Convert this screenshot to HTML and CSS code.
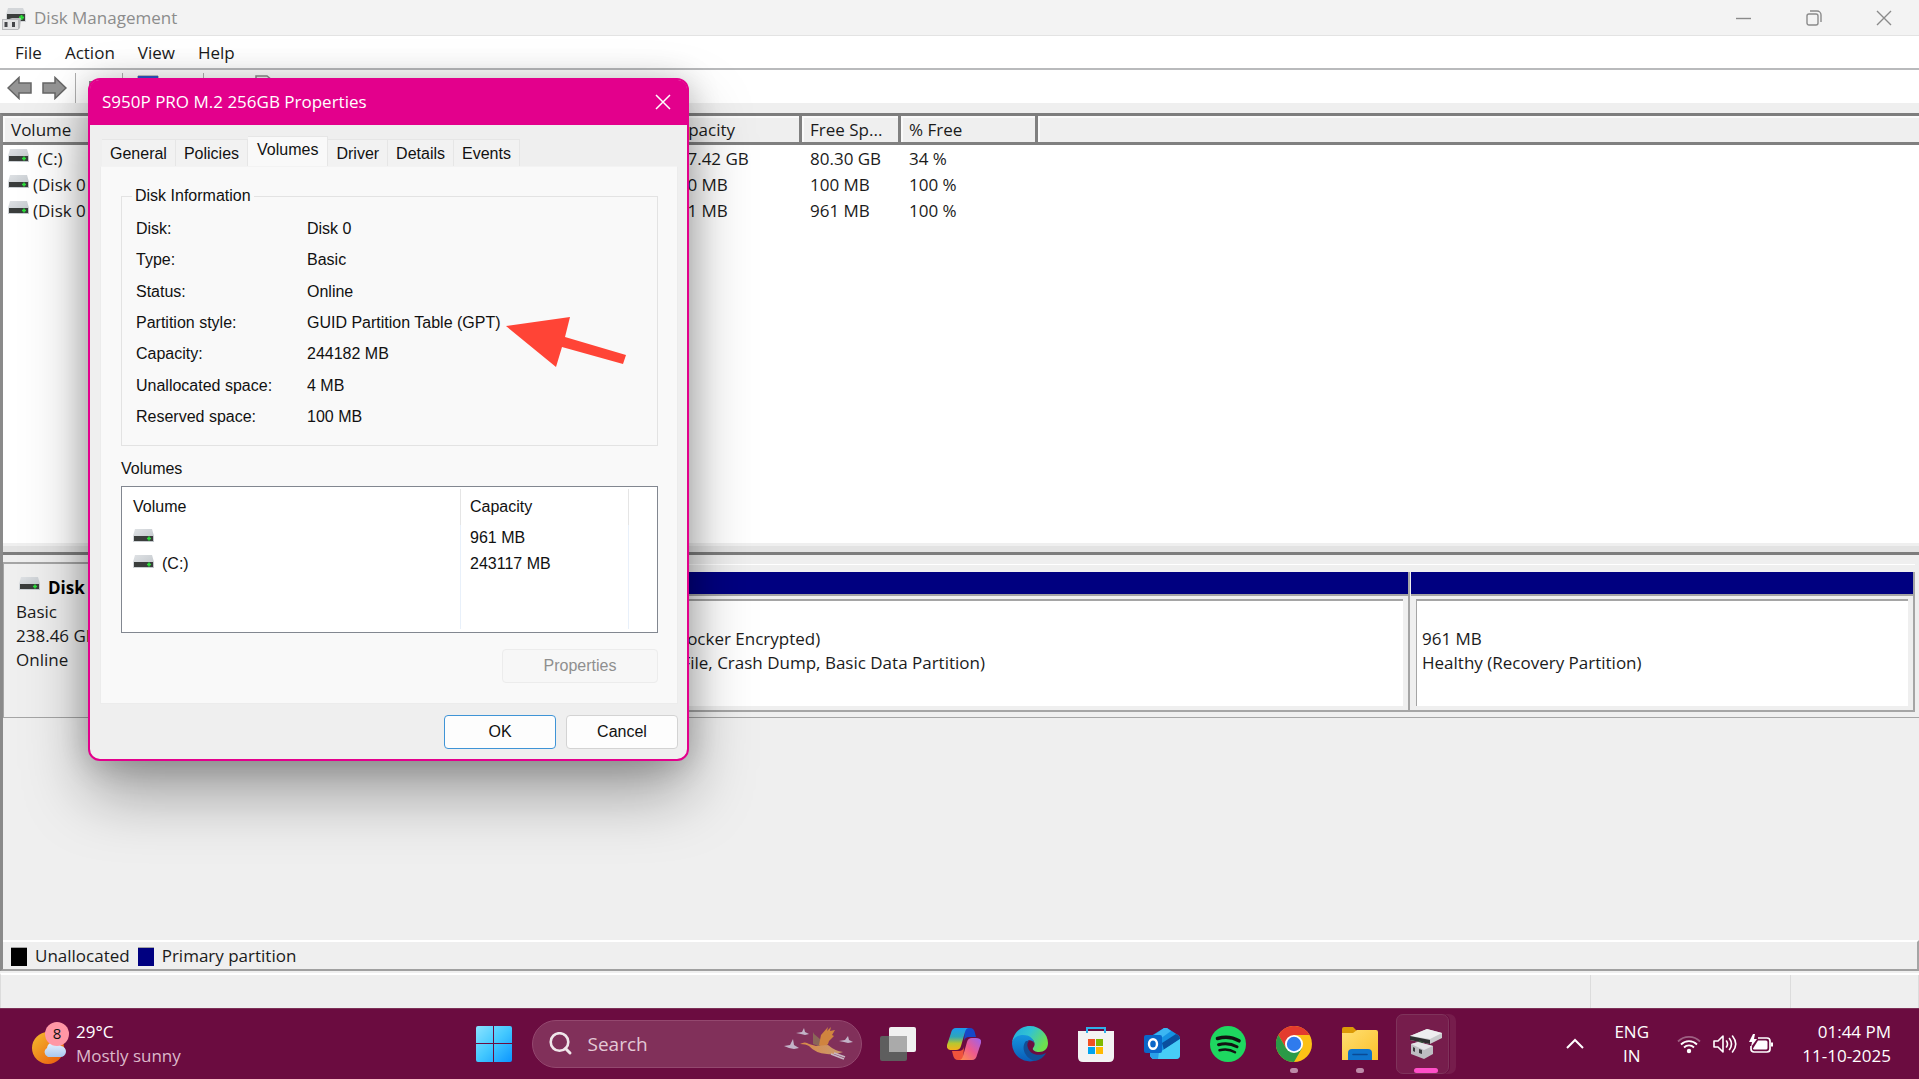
FILE: index.html
```html
<!DOCTYPE html>
<html lang="en">

<head>
    <meta charset="UTF-8">
    <meta name="viewport" content="width=device-width, initial-scale=1.0">
    <title>Disk Management</title>
    <link rel="stylesheet" href="styles.css">
</head>

<body>
    <!-- shared icons -->
    <svg class="defs" width="0" height="0" aria-hidden="true">
        <defs>
            <linearGradient id="drive-top" x1="0" y1="0" x2="1" y2="1">
                <stop offset="0" stop-color="#dfe2e5" />
                <stop offset="1" stop-color="#bfc4c9" />
            </linearGradient>
            <symbol id="drive" viewBox="0 0 21 13">
                <path d="M2 0h17l2 7v6H0V7z" fill="url(#drive-top)" />
                <rect x="1" y="7" width="19" height="5" fill="#3a3d3c" />
                <path d="M14 9.500h4M16 7.500v4" stroke="#2be03a" stroke-width="1.600" />
            </symbol>
        </defs>
    </svg>

    <main class="window">
        <header class="titlebar">
            <svg class="app-icon" width="24" height="24" viewBox="0 0 24 24" aria-hidden="true">
                <path d="M6 2h15l3 7v7H4V9z" fill="#d3d6d9" />
                <rect x="5" y="8" width="18" height="7" fill="#3b3e3d" />
                <path d="M17 11.500h5M19.500 9v5" stroke="#2be03a" stroke-width="2" />
                <path d="M0 13h7l3-1h9l-1 10-2 2H0z" fill="#b9babd" />
                <rect x="1" y="14" width="15" height="9" fill="#e4e4e6" />
                <path d="M4 16v5M11.500 16v5" stroke="#45464a" stroke-width="3" />
            </svg>
            <h1>Disk Management</h1>
            <div class="window-controls">
                <button type="button" aria-label="Minimize"><svg width="16" height="16"><path d="M0 8.500h15" /></svg></button>
                <button type="button" aria-label="Restore"><svg width="16" height="16"><rect x="1" y="4" width="11" height="11" rx="2" /><path d="M4 1h7a4 4 0 0 1 4 4v7" /></svg></button>
                <button type="button" aria-label="Close"><svg width="16" height="16"><path d="M1 1l14 14M15 1L1 15" /></svg></button>
            </div>
        </header>

        <nav class="menubar">
            <button type="button">File</button>
            <button type="button">Action</button>
            <button type="button">View</button>
            <button type="button">Help</button>
        </nav>

        <div class="toolbar">
            <button type="button" aria-label="Back"><svg width="26" height="24" viewBox="0 0 26 24"><path d="M1 12L12 1.500V7h12v10H12v5.500z" fill="#949494" stroke="#666" stroke-width="1.500" /></svg></button>
            <button type="button" aria-label="Forward"><svg width="26" height="24" viewBox="0 0 26 24"><path d="M25 12L14 1.500V7H2v10h12v5.500z" fill="#949494" stroke="#666" stroke-width="1.500" /></svg></button>
            <span class="separator"></span>
            <button type="button" aria-label="Up"><svg width="26" height="26" viewBox="0 0 26 26"><path d="M1 6h9l2 3h12v14H1z" fill="#8b8b8b" /></svg></button>
            <span class="separator"></span>
            <button type="button" aria-label="Console tree"><svg width="26" height="26" viewBox="0 0 26 26"><path d="M3 1h20v24H3z" fill="#fff" stroke="#888" /><path d="M3 1h20v4H3z" fill="#2f56c8" /></svg></button>
            <button type="button" aria-label="Help"><svg width="26" height="26" viewBox="0 0 26 26"><rect x="3" y="6" width="18" height="18" fill="#2f56c8" /></svg></button>
            <span class="separator"></span>
            <button type="button" aria-label="Refresh"><svg width="26" height="26" viewBox="0 0 26 26"><circle cx="13" cy="15" r="7" fill="none" stroke="#888" stroke-width="2" /></svg></button>
            <button type="button" aria-label="Properties"><svg width="26" height="26" viewBox="0 0 26 26"><path d="M6 1h11l5 4v20H6z" fill="#f4f4f4" stroke="#8a8a8a" stroke-width="1.500" /></svg></button>
        </div>

        <section class="console">
            <div class="volume-list">
                <table>
                    <colgroup>
                        <col class="col-volume">
                        <col class="col-capacity">
                        <col class="col-free">
                        <col class="col-percent">
                        <col>
                    </colgroup>
                    <thead>
                        <tr>
                            <th>Volume</th>
                            <th>Capacity</th>
                            <th>Free Sp...</th>
                            <th>% Free</th>
                            <th></th>
                        </tr>
                    </thead>
                    <tbody>
                        <tr>
                            <td><svg class="drive"><use href="#drive" /></svg>&nbsp;(C:)</td>
                            <td>237.42 GB</td>
                            <td>80.30 GB</td>
                            <td>34 %</td>
                            <td></td>
                        </tr>
                        <tr>
                            <td><svg class="drive"><use href="#drive" /></svg>(Disk 0 partition 1)</td>
                            <td>100 MB</td>
                            <td>100 MB</td>
                            <td>100 %</td>
                            <td></td>
                        </tr>
                        <tr>
                            <td><svg class="drive"><use href="#drive" /></svg>(Disk 0 partition 4)</td>
                            <td>961 MB</td>
                            <td>961 MB</td>
                            <td>100 %</td>
                            <td></td>
                        </tr>
                    </tbody>
                </table>
            </div>

            <div class="splitter"></div>

            <div class="graph">
                <div class="disk-row">
                    <div class="disk-info">
                        <h2><svg class="drive"><use href="#drive" /></svg>Disk 0</h2>
                        <p>Basic</p>
                        <p>238.46 GB</p>
                        <p>Online</p>
                    </div>
                    <div class="partitions">
                        <div class="partition">
                            <div class="bar"></div>
                            <div class="details">
                                <p>100 MB</p>
                                <p>Healthy (EFI System Partition)</p>
                            </div>
                        </div>
                        <div class="partition">
                            <div class="bar"></div>
                            <div class="details">
                                <p>237.42 GB NTFS (BitLocker Encrypted)</p>
                                <p>Healthy (Boot, Page File, Crash Dump, Basic Data Partition)</p>
                            </div>
                        </div>
                        <div class="partition">
                            <div class="bar"></div>
                            <div class="details">
                                <p>961 MB</p>
                                <p>Healthy (Recovery Partition)</p>
                            </div>
                        </div>
                    </div>
                </div>
            </div>

            <div class="legend">
                <span class="swatch unallocated"></span>
                <span>Unallocated</span>
                <span class="swatch primary"></span>
                <span>Primary partition</span>
            </div>
        </section>

        <footer class="statusbar">
            <span></span>
            <span></span>
            <span></span>
        </footer>
    </main>

    <div class="dialog" role="dialog" aria-labelledby="dialog-title">
        <div class="dialog-title">
            <h2 id="dialog-title">S950P PRO M.2 256GB Properties</h2>
            <button type="button" aria-label="Close"><svg width="16" height="16"><path d="M1 1l14 14M15 1L1 15" stroke="#fff" stroke-width="1.500" /></svg></button>
        </div>
        <div class="dialog-body">
            <div class="tabs" role="tablist">
                <button type="button" role="tab">General</button>
                <button type="button" role="tab">Policies</button>
                <button type="button" role="tab" class="active" aria-selected="true">Volumes</button>
                <button type="button" role="tab">Driver</button>
                <button type="button" role="tab">Details</button>
                <button type="button" role="tab">Events</button>
            </div>
            <div class="panel" role="tabpanel">
                <fieldset>
                    <legend>Disk Information</legend>
                    <dl>
                        <dt>Disk:</dt>
                        <dd>Disk 0</dd>
                        <dt>Type:</dt>
                        <dd>Basic</dd>
                        <dt>Status:</dt>
                        <dd>Online</dd>
                        <dt>Partition style:</dt>
                        <dd>GUID Partition Table (GPT)</dd>
                        <dt>Capacity:</dt>
                        <dd>244182 MB</dd>
                        <dt>Unallocated space:</dt>
                        <dd>4 MB</dd>
                        <dt>Reserved space:</dt>
                        <dd>100 MB</dd>
                    </dl>
                </fieldset>
                <h3 id="volumes-label">Volumes</h3>
                <div class="listbox">
                    <table aria-labelledby="volumes-label">
                        <thead>
                            <tr>
                                <th>Volume</th>
                                <th>Capacity</th>
                                <th></th>
                            </tr>
                        </thead>
                        <tbody>
                            <tr>
                                <td><svg class="drive"><use href="#drive" /></svg></td>
                                <td>961 MB</td>
                                <td></td>
                            </tr>
                            <tr>
                                <td><svg class="drive"><use href="#drive" /></svg>(C:)</td>
                                <td>243117 MB</td>
                                <td></td>
                            </tr>
                            <tr class="filler">
                                <td></td>
                                <td></td>
                                <td></td>
                            </tr>
                        </tbody>
                    </table>
                </div>
                <button type="button" class="btn btn-wide" disabled>Properties</button>
            </div>
            <div class="actions">
                <button type="button" class="btn btn-default">OK</button>
                <button type="button" class="btn">Cancel</button>
            </div>
        </div>
        <svg class="arrow" width="121" height="51" viewBox="0 0 121 51" aria-hidden="true">
            <path d="M0 9L64 0l-5 20 61 18-3 9-61-17-6 20z" fill="#ff4436" />
        </svg>
    </div>

    <div class="taskbar">
        <button type="button" class="weather">
            <svg width="40" height="44" viewBox="0 0 40 44" aria-hidden="true">
                <defs>
                    <linearGradient id="sun" x1="0" y1="0" x2="1" y2="1">
                        <stop offset="0" stop-color="#f5bd2e" />
                        <stop offset="1" stop-color="#e9560d" />
                    </linearGradient>
                    <linearGradient id="cloud" x1="0" y1="0" x2="0" y2="1">
                        <stop offset="0" stop-color="#eaf3ff" />
                        <stop offset="1" stop-color="#a9c8f0" />
                    </linearGradient>
                </defs>
                <circle cx="16" cy="26" r="16" fill="url(#sun)" />
                <path d="M16 35a5 5 0 0 1-1-9 7 7 0 0 1 12-4q2 2 2 2a5 5 0 0 1-1 11z" fill="url(#cloud)" />
                <circle cx="25" cy="12" r="12" fill="#ff97a5" />
                <text x="25" y="17" class="badge-text">8</text>
            </svg>
            <span class="weather-text">
                <span>29°C</span>
                <span class="muted">Mostly sunny</span>
            </span>
        </button>

        <div class="apps">
            <button type="button" class="app" aria-label="Start">
                <svg width="36" height="36" viewBox="0 0 36 36">
                    <defs>
                        <linearGradient id="win" x1="0" y1="0" x2="36" y2="36" gradientUnits="userSpaceOnUse">
                            <stop offset="0" stop-color="#8be3ff" />
                            <stop offset="0.500" stop-color="#43c8ff" />
                            <stop offset="1" stop-color="#0c95ff" />
                        </linearGradient>
                    </defs>
                    <path d="M2 0h15v17H0V2q0-2 2-2zM18 0h16q2 0 2 2v15H18zM0 18h17v18H2q-2 0-2-2zM18 18h18v16q0 2-2 2H18z" fill="url(#win)" />
                </svg>
            </button>

            <label class="search">
                <svg width="24" height="24" viewBox="0 0 24 24" aria-hidden="true">
                    <circle cx="10.500" cy="10" r="8.800" fill="none" stroke="#f0e6ea" stroke-width="2.600" />
                    <path d="M16.500 16.500L21 21" stroke="#f0e6ea" stroke-width="3" stroke-linecap="round" />
                </svg>
                <input type="text" placeholder="Search" aria-label="Search">
                <svg width="70" height="36" viewBox="0 0 70 36" aria-hidden="true">
                    <defs>
                        <linearGradient id="bird" x1="0" y1="0" x2="1" y2="0">
                            <stop offset="0" stop-color="#d98a45" />
                            <stop offset="1" stop-color="#c99a72" />
                        </linearGradient>
                    </defs>
                    <g fill="#c3b3c8">
                        <path d="M0 20l6-1 3-6 1 6 5 3-5 1-5-1z" />
                        <path d="M12 7l6-1 2-4 1 4 4 2-4 1-4-1z" />
                        <path d="M55 15l6-1 3-4 1 4 4 2-5 1-4-1z" />
                    </g>
                    <path d="M29 6l1 2 6 5 1 8-8-3z" fill="#8a6658" />
                    <path d="M35 19l2-10 7-8-1 4 4-4-1 4 5-1-3 5 2 1-5 5-1 3-4 4z" fill="#d0843f" />
                    <path d="M16 18q5-3 9 0l7 2 12-1q7 6 15 7-8 3-16 2-12-1-18-8-3-2-9-2z" fill="url(#bird)" />
                    <path d="M47 28l13 5M50 27l11 4" stroke="#c9b8c4" stroke-width="1.800" />
                </svg>
            </label>

            <button type="button" class="app" aria-label="Task view">
                <svg width="36" height="34" viewBox="0 0 36 34">
                    <rect x="9" y="0" width="27" height="25" rx="2" fill="#f1f1f1" />
                    <rect x="0" y="9" width="27" height="25" rx="2" fill="#5e5e5e" />
                    <rect x="9" y="9" width="18" height="16" fill="#aaa" />
                </svg>
            </button>
            <button type="button" class="app" aria-label="Copilot">
                <svg width="34" height="32" viewBox="0 0 34 32">
                    <defs>
                        <linearGradient id="cop-a" x1="0" y1="0" x2="0" y2="1">
                            <stop offset="0" stop-color="#1b9af0" />
                            <stop offset="0.400" stop-color="#2fa6b8" />
                            <stop offset="0.700" stop-color="#b9c72f" />
                            <stop offset="1" stop-color="#f6b01c" />
                        </linearGradient>
                        <linearGradient id="cop-b" x1="1" y1="0" x2="0" y2="1">
                            <stop offset="0" stop-color="#9a62f0" />
                            <stop offset="0.500" stop-color="#ee5a8e" />
                            <stop offset="1" stop-color="#ff9448" />
                        </linearGradient>
                    </defs>
                    <path d="M18 0h5q4 0 5 5l1 4h-7q-4 0-5 4z" fill="#1647c8" />
                    <path d="M16 32h-5q-4 0-5-5l-1-4h7q4 0 5-4z" fill="#f0533c" />
                    <path d="M9 0h13q-3 0-4 4l-4 14q-1 4-5 4H5q-6 0-5-5L4 5q1-5 5-5z" fill="url(#cop-a)" />
                    <path d="M25 32H12q3 0 4-4l4-14q1-4 5-4h4q6 0 5 5l-4 12q-1 5-5 5z" fill="url(#cop-b)" />
                </svg>
            </button>
            <button type="button" class="app" aria-label="Edge">
                <svg width="36" height="36" viewBox="0 0 36 36">
                    <defs>
                        <linearGradient id="edge-a" x1="0" y1="0" x2="1" y2="0.500">
                            <stop offset="0" stop-color="#1fa8e0" />
                            <stop offset="0.500" stop-color="#32c3d2" />
                            <stop offset="1" stop-color="#6de04e" />
                        </linearGradient>
                        <linearGradient id="edge-b" x1="0" y1="0" x2="0" y2="1">
                            <stop offset="0" stop-color="#1595de" />
                            <stop offset="1" stop-color="#0a5db8" />
                        </linearGradient>
                    </defs>
                    <path d="M0 16C2 6 9 0 18 0c10 0 18 8 18 17 0 6-4 9-9 9-4 0-7-2-6-4 4-5 0-10-6-10C7 10 3 12 0 16z" fill="url(#edge-a)" />
                    <path d="M0 18c0-6 6-9 11-9 8 0 11 5 11 8-2-4-8-4-9 2 0 8 6 14 12 15a18 18 0 0 1-25-16z" fill="url(#edge-b)" />
                    <path d="M14 15c-6 7 0 18 9 20 5-1 9-4 11-8-8 4-16 1-18-5-1-3-1-5 1-7z" fill="#124f97" />
                </svg>
            </button>
            <button type="button" class="app" aria-label="Microsoft Store">
                <svg width="36" height="36" viewBox="0 0 36 36">
                    <path d="M0 5h36v26q0 5-5 5H5q-5 0-5-5z" fill="#f3f3f3" />
                    <path d="M9 7V2h18v5" fill="none" stroke="#2eb0ea" stroke-width="2" />
                    <path d="M10 13h7v7h-7z" fill="#f25022" />
                    <path d="M18 13h7v7h-7z" fill="#7fba00" />
                    <path d="M10 21h7v7h-7z" fill="#00a4ef" />
                    <path d="M18 21h7v7h-7z" fill="#ffb900" />
                </svg>
            </button>
            <button type="button" class="app" aria-label="Outlook">
                <svg width="36" height="32" viewBox="0 0 36 32">
                    <path d="M7 8L20 0q1-1 3 0l11 7q2 1 2 4v16q0 4-4 4H11q-5 0-5-5z" fill="#1592e2" />
                    <path d="M10 7L20 0q1-1 3 0l4 3-11 8z" fill="#3bb6f2" />
                    <path d="M18 15l14-9q4 2 4 5L20 22z" fill="#0a4f9e" />
                    <path d="M6 24l10 0 20-13v16q0 4-4 4H11q-5 0-5-5z" fill="#47cdf6" />
                    <path d="M6 24h9l-1 7H11q-5 0-5-5z" fill="#2aa0e8" />
                    <rect x="0" y="7" width="18" height="18" rx="2" fill="#0a66c8" />
                    <ellipse cx="9" cy="16" rx="4" ry="4.800" fill="none" stroke="#fff" stroke-width="2.400" />
                </svg>
            </button>
            <button type="button" class="app" aria-label="Spotify">
                <svg width="36" height="36" viewBox="0 0 36 36">
                    <circle cx="18" cy="18" r="18" fill="#1ed760" />
                    <g fill="none" stroke="#121212" stroke-linecap="round">
                        <path d="M7.500 12.500c7-2 15-1.500 21.500 2.300" stroke-width="3.600" />
                        <path d="M8.500 18.700c6-1.700 13-1 18.500 2" stroke-width="3" />
                        <path d="M9.500 24.300c5-1.300 11-0.800 15.500 2" stroke-width="2.500" />
                    </g>
                </svg>
            </button>
            <button type="button" class="app running" aria-label="Chrome">
                <svg width="36" height="36" viewBox="0 0 36 36">
                    <circle cx="18" cy="18" r="18" fill="#fbc116" />
                    <path d="M2.400 9A18 18 0 0 1 33.600 9H18l-7.800 13.500z" fill="#e33b2e" />
                    <path d="M2.400 9A18 18 0 0 0 18 36l7.800-13.500H10.200z" fill="#2a9a47" />
                    <circle cx="18" cy="18" r="9" fill="#fff" />
                    <circle cx="18" cy="18" r="7.200" fill="#2f7bed" />
                </svg>
            </button>
            <button type="button" class="app running" aria-label="File Explorer">
                <svg width="36" height="34" viewBox="0 0 36 34">
                    <defs>
                        <linearGradient id="folder" x1="0" y1="0" x2="1" y2="1">
                            <stop offset="0" stop-color="#ffdf72" />
                            <stop offset="1" stop-color="#fbc02a" />
                        </linearGradient>
                    </defs>
                    <path d="M0 2q0-2 2-2h9l4 4v5H0z" fill="#dc9a06" />
                    <path d="M0 6h11l4-3h19q2 0 2 2v28H0z" fill="url(#folder)" />
                    <path d="M6 33v-7q0-4 4-4h16q4 0 4 4v7z" fill="#0f74cc" />
                    <path d="M11 27.500h14" stroke="#0a4a94" stroke-width="1.600" stroke-linecap="round" />
                </svg>
            </button>
            <button type="button" class="app current" aria-label="Disk Management">
                <svg width="34" height="32" viewBox="0 0 34 32">
                    <path d="M1 8L18 1l15 4v5l-12 6L1 12z" fill="#c9cacd" />
                    <path d="M1 8L18 1l15 4-12 6z" fill="#eeeef0" />
                    <path d="M1 8l20 4v4L1 12z" fill="#2e2f30" />
                    <path d="M10 12l4 2v4l-4-2z" fill="#37513b" />
                    <path d="M2 16l7-2 15 4v8l-9 5-13-5z" fill="#bdbdc2" />
                    <path d="M2 16l7-2 15 4-9 4z" fill="#e5e5e8" />
                    <path d="M4 19l2 1v4l-2-1zM10 21l3 1v4l-3-1z" fill="#3c3c40" />
                </svg>
            </button>
        </div>

        <div class="tray">
            <button type="button" class="chevron" aria-label="Show hidden icons"><svg width="18" height="12" viewBox="0 0 18 12"><path d="M1 10l8-8 8 8" fill="none" stroke="#fff" stroke-width="2" /></svg></button>
            <button type="button" class="lang"><span>ENG</span><span>IN</span></button>
            <button type="button" class="status-icons" aria-label="Network, volume, battery">
                <svg width="24" height="20" viewBox="0 0 24 20" fill="none" stroke="#fff" stroke-width="1.800">
                    <path d="M1 7.500a15.500 15.500 0 0 1 22 0" stroke-opacity="0.350" />
                    <path d="M4 10.500a11.300 11.300 0 0 1 16 0M7 13.500a7 7 0 0 1 10 0" />
                    <circle cx="12" cy="17" r="2.200" fill="#fff" stroke="none" />
                </svg>
                <svg width="24" height="20" viewBox="0 0 24 20" fill="none" stroke="#fff" stroke-width="1.600" stroke-linejoin="round">
                    <path d="M1 7h4l5-5v16l-5-5H1z" />
                    <path d="M13.500 7q2 3 0 6M16.500 4.500q4 5.500 0 11M19.500 2q6.500 8 0 16" stroke-linecap="round" />
                </svg>
                <svg width="24" height="20" viewBox="0 0 24 20">
                    <path d="M9 4h9q3 0 3 3v8q0 3-3 3H5q-3 0-3-3v-3" fill="none" stroke="#fff" stroke-width="1.700" />
                    <path d="M9 6.500h8q1.500 0 1.500 1.500v6q0 1.500-1.500 1.500H5q-1 0-1-1z" fill="#fff" />
                    <path d="M22 8.500h2v4h-2z" fill="#fff" />
                    <path d="M4 0L0 8h3l-1 5 6-8H5l1-5z" fill="#fff" />
                </svg>
            </button>
            <button type="button" class="clock"><span>01:44 PM</span><span>11-10-2025</span></button>
        </div>
    </div>
</body>

</html>
```

FILE: styles.css
```css
* {
    box-sizing: border-box;
}

body {
    display: flex;
    flex-direction: column;
    min-height: 100vh;
    margin: 0;
    font-family: "Segoe UI", "Open Sans", sans-serif;
    font-size: 17px;
    line-height: 24px;
    color: #1b1b1b;
    background-color: #efefef;
}

h1, h2, h3, p, dl, dd {
    margin: 0;
    font-size: inherit;
    font-weight: normal;
}

button {
    padding: 0;
    border: 0;
    background: none;
    font: inherit;
    color: inherit;
}

svg {
    flex: none;
}

table {
    border-spacing: 0;
    table-layout: fixed;
    width: 100%;
}

th {
    font-weight: normal;
    text-align: left;
}

.defs {
    position: absolute;
}

.drive {
    width: 21px;
    height: 13px;
}

/* main window */
.window {
    flex: 1;
    display: flex;
    flex-direction: column;
}

.titlebar {
    display: flex;
    align-items: center;
    height: 36px;
    padding-left: 2px;
    background-color: #f3f3f3;
    border-bottom: 1px solid #e3e3e3;
    color: #8c8c8c;
}

.titlebar h1 {
    margin-left: 8px;
}

.window-controls {
    display: flex;
    margin-left: auto;
}

.window-controls button {
    display: flex;
    align-items: center;
    justify-content: center;
    width: 70px;
    height: 34px;
}

.window-controls svg {
    fill: none;
    stroke: #8a8a8a;
    stroke-width: 1.4;
}

.menubar {
    display: flex;
    gap: 23px;
    height: 34px;
    padding: 2px 0 0 15px;
    background-color: #fff;
    border-bottom: 2px solid #b9babc;
}

.toolbar {
    display: flex;
    align-items: center;
    height: 33px;
    padding: 2px 0 0 7px;
    gap: 8px;
    background-color: #fff;
}

.toolbar button {
    display: flex;
}

.separator {
    width: 1px;
    height: 30px;
    margin-right: 4px;
    background-color: #b0b0b0;
}

.console {
    flex: 1;
    display: flex;
    flex-direction: column;
    margin-top: 10px;
    border-top: 3px solid #7d7d7d;
    border-left: 3px solid #8a8a8a;
    border-bottom: 2px solid #a0a0a0;
}

.volume-list {
    flex: 10 0 0;
    background-color: #fff;
}

.col-volume {
    width: 657px;
}

.col-capacity {
    width: 142px;
}

.col-free {
    width: 99px;
}

.col-percent {
    width: 137px;
}

.volume-list th {
    height: 29px;
    padding: 2px 0 0 8px;
    background-color: #efefef;
    border-right: 3px solid #808080;
    border-bottom: 3px solid #808080;
    line-height: 24px;
    box-shadow: inset 2px 2px #fafafa;
}

.volume-list th:last-child {
    border-right: 0;
}

.volume-list td {
    height: 26px;
    padding: 1px 0 0 8px;
}

.volume-list td:first-child {
    padding-left: 5px;
}

.volume-list .drive {
    margin-right: 4px;
    vertical-align: 3px;
}

.splitter {
    height: 12px;
    border-top: 3px solid #efefef;
    border-bottom: 3px solid #7d7d7d;
    background-color: #e3e3e3;
}

.graph {
    flex: 9 0 0;
}

.disk-row {
    display: flex;
    height: 156px;
    margin-top: 7px;
    border-bottom: 1px solid #a5a5a5;
}

.disk-info {
    width: 132px;
    padding: 10px 0 0 12px;
    border-top: 2px solid #a5a5a5;
    border-left: 1px solid #a5a5a5;
}

.disk-info h2 {
    display: flex;
    gap: 8px;
    margin-left: 3px;
    padding-top: 2px;
    font-weight: bold;
    color: #000;
}

.disk-info h2 .drive {
    margin-top: 1px;
}

.partitions {
    flex: 1;
    display: grid;
    grid-template-columns: 75fr 180fr 101fr;
    margin: 2px 4px 5px 0;
    padding-top: 7px;
    border-top: 1px solid #fff;
    border-bottom: 2px solid #a5a5a5;
}

.partition {
    display: flex;
    flex-direction: column;
    border-right: 2px solid #a5a5a5;
}

.bar {
    height: 24px;
    margin-left: 1px;
    background-color: #000080;
    border-bottom: 2px solid #a5a5a5;
}

.details {
    flex: 1;
    margin: 3px 5px 4px 6px;
    padding: 26px 0 0 5px;
    background-color: #fff;
    border-top: 2px solid #a5a5a5;
    border-left: 1px solid #a5a5a5;
    white-space: nowrap;
}

.legend {
    display: flex;
    align-items: center;
    gap: 8px;
    height: 29px;
    padding: 1px 0 0 8px;
    border-top: 2px solid #fff;
    border-right: 2px solid #a5a5a5;
}

.swatch {
    width: 16px;
    height: 19px;
    border-top: 1px solid #a5a5a5;
}

.unallocated {
    background-color: #000;
}

.primary {
    background-color: #000080;
}

.statusbar {
    display: flex;
    height: 35px;
    margin-top: 2px;
    border-top: 2px solid #fff;
    border-left: 1px solid #dcdcdc;
}

.statusbar span {
    width: 200px;
    border-right: 1px solid #dcdcdc;
}

.statusbar span:first-child {
    flex: 1;
}

.statusbar span:last-child {
    width: 128px;
}

/* properties dialog */
.dialog {
    position: absolute;
    top: 78px;
    left: 88px;
    width: 601px;
    border: 2px solid #e3008c;
    border-radius: 12px;
    background-color: #efefef;
    color: #111;
    box-shadow: 0 32px 64px rgba(0, 0, 0, 0.35), 0 2px 32px rgba(0, 0, 0, 0.2);
}

.dialog-title {
    display: flex;
    align-items: center;
    justify-content: space-between;
    height: 45px;
    padding: 0 16px 2px 12px;
    border-radius: 9px 9px 0 0;
    background-color: #e3008c;
    color: #fff;
}

.dialog-title button {
    display: flex;
}

.dialog-body {
    padding: 11px 9px 10px 10px;
    font-family: Arial, "Liberation Sans", sans-serif;
    font-size: 16px;
    line-height: 20px;
}

.tabs {
    display: flex;
    align-items: flex-end;
    padding-left: 2px;
}

.tabs button {
    height: 27px;
    padding: 1px 8px 0;
    background-color: #f2f2f2;
    border: 1px solid #e6e6e6;
    border-width: 1px 1px 0 0;
}

.tabs .active {
    height: 30px;
    padding: 0 9px 3px;
    background-color: #f9f9f9;
}

.panel {
    display: flex;
    flex-direction: column;
    padding: 19px 19px 20px 20px;
    background-color: #f9f9f9;
    border: 1px solid #ececec;
    border-top-color: #f3f3f3;
}

fieldset {
    margin: 0;
    padding: 7px 14px 12px;
    border: 1px solid #e3e3e3;
}

legend {
    margin-left: -4px;
    padding: 0 3px;
}

dl {
    display: grid;
    grid-template-columns: 171px 1fr;
    grid-auto-rows: 1fr;
    align-items: center;
    height: 220px;
}

.panel h3 {
    margin: 13px 0 7px;
}

.listbox {
    height: 147px;
    padding: 2px;
    background-color: #fff;
    border: 1px solid #828790;
}

.listbox th {
    width: 168px;
    height: 36px;
    padding: 0 9px;
    border-right: 1px solid #e5e5e5;
}

.listbox th:first-child {
    width: 337px;
}

.listbox td {
    height: 26px;
    padding: 0 9px;
    border-right: 1px solid #e8f0fa;
}

.listbox th:last-child,
.listbox td:last-child {
    width: auto;
    border-right: 0;
}

.listbox .filler td {
    height: 52px;
}

.listbox .drive {
    margin-right: 8px;
    vertical-align: 1px;
}

.btn {
    width: 112px;
    height: 34px;
    background-color: #fdfdfd;
    border: 1px solid #d3d3d3;
    border-radius: 4px;
}

.btn-default {
    border-color: #3f94d6;
}

.btn-wide {
    align-self: flex-end;
    width: 156px;
    margin-top: 16px;
    background-color: #f7f7f7;
    border-color: #ececec;
    color: #8f8f8f;
}

.actions {
    display: flex;
    justify-content: flex-end;
    gap: 10px;
    margin-top: 11px;
}

.arrow {
    position: absolute;
    top: 237px;
    left: 416px;
}

/* taskbar */
.taskbar {
    display: grid;
    grid-template-columns: 1fr auto 1fr;
    height: 71px;
    background-color: #6b0c40;
    border-top: 1px solid #7c3157;
    color: #fff;
}

.weather {
    display: flex;
    align-items: center;
    gap: 4px;
    padding-left: 32px;
    text-align: left;
}

.weather-text {
    display: flex;
    flex-direction: column;
}

.badge-text {
    font-size: 15px;
    text-anchor: middle;
    fill: #111;
}

.muted {
    color: #dcb9ca;
}

.apps {
    display: flex;
    align-items: center;
}

.app {
    position: relative;
    display: flex;
    align-items: center;
    justify-content: center;
    width: 66px;
    height: 60px;
}

.search {
    display: flex;
    align-items: center;
    width: 330px;
    height: 48px;
    margin: 0 3px 0 5px;
    padding: 0 7px 0 16px;
    gap: 15px;
    background-color: #81305a;
    border: 1px solid #94486f;
    border-radius: 24px;
}

.search input {
    flex: 1;
    min-width: 0;
    padding: 0;
    border: 0;
    outline: 0;
    background: none;
    font: inherit;
    font-size: 19px;
    color: #fff;
}

.search input::placeholder {
    color: #e3c9d6;
    opacity: 1;
}

/* running indicator under the icon */
.running::after,
.current::after {
    content: "";
    position: absolute;
    bottom: 1px;
    left: 50%;
    width: 8px;
    height: 5px;
    margin-left: -4px;
    border-radius: 3px;
    background-color: #bd8aa8;
}

.current {
    width: 60px;
    margin: 0 3px;
    border-radius: 7px;
    background-color: #761d4c;
    isolation: isolate;
}

/* front card of the window stack */
.current::before {
    content: "";
    position: absolute;
    z-index: -1;
    inset: 0 7px 0 0;
    border: 1px solid #7f335b;
    border-radius: 7px;
    background-color: #761d4c;
    box-shadow: 1px 0 #6b0c40;
}

.current::after {
    width: 24px;
    margin-left: -12px;
    background-color: #ff4fc8;
}

.tray {
    display: flex;
    align-items: center;
    justify-content: flex-end;
    padding-right: 28px;
}

.tray button {
    display: flex;
}

.tray .lang {
    flex-direction: column;
    align-items: center;
    margin-left: 30px;
}

.tray .status-icons {
    gap: 12px;
    margin-left: 28px;
}

.tray .clock {
    flex-direction: column;
    align-items: flex-end;
    width: 94px;
    margin-left: 24px;
}
```
